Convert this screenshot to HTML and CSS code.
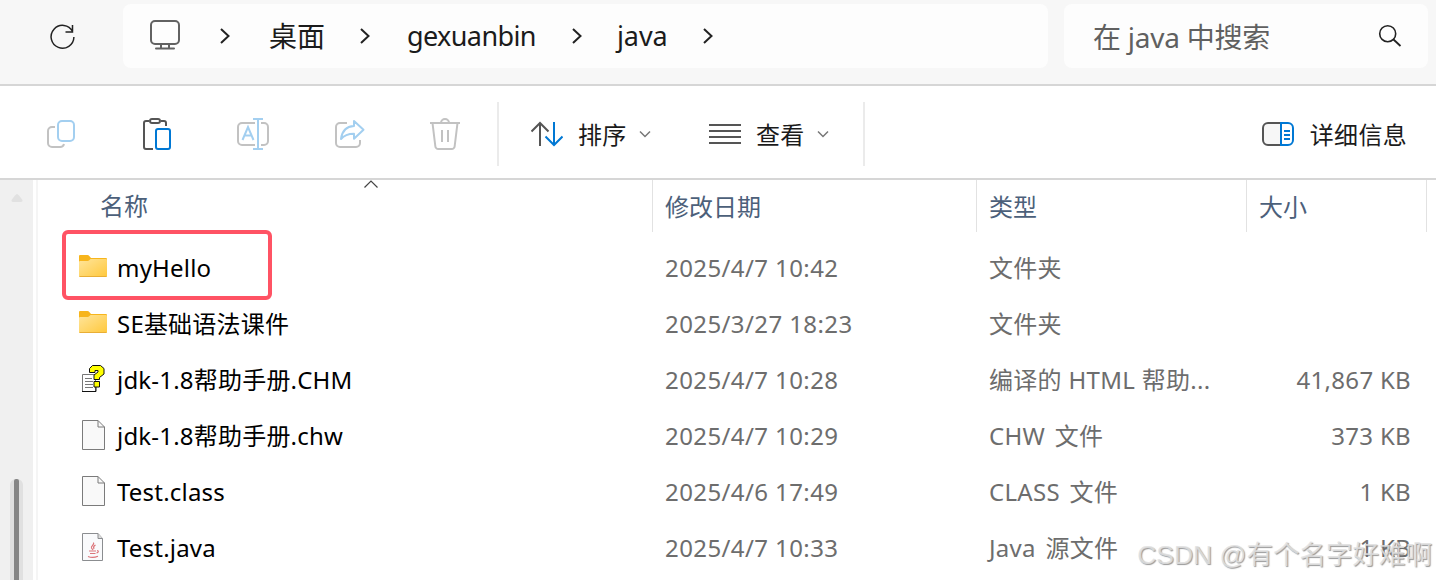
FILE: index.html
```
<!DOCTYPE html>
<html lang="zh-CN">
  <head>
    <meta charset="UTF-8" />
    <meta name="viewport" content="width=device-width, initial-scale=1.0" />
    <title>java</title>
    <link rel="stylesheet" href="styles.css">
  </head>
  <body>
    <div class="window">
      <div class="topbar">
        <div class="refresh">
          <svg width="28" height="28" viewBox="0 0 28 28"><path d="M23.6 8.500A11.400 11.400 0 1 0 24.900 14M23.500 2v7h-7" stroke="#222" stroke-width="1.5"/></svg>
        </div>
        <div class="address">
          <svg class="monitor" width="32" height="32" viewBox="0 0 32 32"><rect x="2" y="2" width="28" height="23" rx="4" stroke="#626262" stroke-width="2"/><path d="M12 25v4M20 25v4M7 29.5h18" stroke="#626262" stroke-width="2" stroke-linecap="round"/></svg>
          <svg class="arrow" width="10" height="18" viewBox="0 0 10 18"><path d="M1 2l7.5 7L1 16"/></svg>
          <span class="crumb desk">桌面</span>
          <svg class="arrow" width="10" height="18" viewBox="0 0 10 18"><path d="M1 2l7.5 7L1 16"/></svg>
          <span class="crumb user">gexuanbin</span>
          <svg class="arrow" width="10" height="18" viewBox="0 0 10 18"><path d="M1 2l7.5 7L1 16"/></svg>
          <span class="crumb folder">java</span>
          <svg class="arrow" width="10" height="18" viewBox="0 0 10 18"><path d="M1 2l7.5 7L1 16"/></svg>
        </div>
        <div class="search">
          <span>在 java 中搜索</span>
          <svg width="24" height="24" viewBox="0 0 24 24"><circle cx="9.7" cy="9.7" r="8" stroke="#222" stroke-width="1.6"/><path d="M15.5 15.5L22.5 22" stroke="#222" stroke-width="1.8"/></svg>
        </div>
      </div>

      <div class="toolbar">
        <div class="tools">
          <svg width="32" height="32" viewBox="0 0 32 32" class="off"><path class="gray" d="M10 9H7a4 4 0 0 0-4 4v12a4 4 0 0 0 4 4h8a4 4 0 0 0 4-3"/><rect class="blue" x="13" y="3" width="16" height="20" rx="4"/></svg>
          <svg width="32" height="32" viewBox="0 0 32 32"><path class="gray" d="M8 3H5a2 2 0 0 0-2 2v24a2 2 0 0 0 2 2h7M20 3h3a2 2 0 0 1 2 2v3"/><rect class="gray" x="9" y="1" width="10" height="4" rx="2"/><rect class="blue" x="15" y="11" width="14" height="20" rx="2"/></svg>
          <svg width="32" height="32" viewBox="0 0 32 32" class="off"><path class="gray" d="M18 5H5a4 4 0 0 0-4 4v14a4 4 0 0 0 4 4h13M24 5h3a4 4 0 0 1 4 4v14a4 4 0 0 1-4 4h-3"/><path class="blue" d="M21 1v30M16 1h10M16 31h10M5.500 22L11 9l5.500 13M7.500 17.500h7"/></svg>
          <svg width="32" height="32" viewBox="0 0 32 32" class="off"><path class="gray" d="M14 5H7a4 4 0 0 0-4 4v16a4 4 0 0 0 4 4h16a4 4 0 0 0 4-4v-3"/><path class="blue" d="M21 3l9.500 8.800-9.500 9v-5c-6 0-9.500 1-13 5.200 1-8 5-12.600 13-13z" stroke-linejoin="round"/></svg>
          <svg width="32" height="32" viewBox="0 0 32 32" class="off"><path class="gray" d="M1 5h30M12 5a4 4 0 0 1 8 0M3.500 5l2.800 23a3 3 0 0 0 3 3h13.400a3 3 0 0 0 3-3L28.500 5M13 12v12M19 12v12"/></svg>
        </div>
        <div class="sort">
          <svg width="32" height="32" viewBox="0 0 32 32"><path class="gray" d="M9 28V5M.5 13.500L9 5l8.500 8.500"/><path class="blue" d="M23 4v23M14.500 18.500L23 27l8.500-8.500"/></svg>
          <span>排序</span>
          <svg class="down" width="12" height="8" viewBox="0 0 12 8"><path d="M1 1.500l5 5 5-5"/></svg>
        </div>
        <div class="view">
          <svg width="32" height="32" viewBox="0 0 32 32"><path class="gray" d="M0 7h32M0 13h32M0 19h32M0 25h32"/></svg>
          <span>查看</span>
          <svg class="down" width="12" height="8" viewBox="0 0 12 8"><path d="M1 1.500l5 5 5-5"/></svg>
        </div>
        <div class="more">
          <svg width="32" height="6" viewBox="0 0 32 6" fill="#1b1b1b"><circle cx="3" cy="3" r="2.700"/><circle cx="16" cy="3" r="2.700"/><circle cx="29" cy="3" r="2.700"/></svg>
        </div>
        <div class="details">
          <svg width="32" height="32" viewBox="0 0 32 32"><path class="gray" d="M18 5H6a5 5 0 0 0-5 5v12a5 5 0 0 0 5 5h12" fill="#f7f7f7"/><path class="blue" d="M19 5h7a5 5 0 0 1 5 5v12a5 5 0 0 1-5 5h-7zM22 13h6M22 17h6M22 21h6"/></svg>
          <span>详细信息</span>
        </div>
      </div>

      <div class="content">
        <div class="side">
          <svg width="12" height="8" viewBox="0 0 12 8"><path d="M6 0Q7 0 8 1.500L11.500 6Q12 8 10 8H2Q0 8 .5 6L4 1.500Q5 0 6 0z" fill="#e1e1e1"/></svg>
          <div class="scroll"><div class="thumb"></div></div>
        </div>
        <div class="list">
          <div class="row head">
            <div class="name">名称
              <svg class="up" width="14" height="8" viewBox="0 0 14 8"><path d="M.5 7.500L7 1l6.500 6.500" stroke="#444" stroke-width="1.200"/></svg>
            </div>
            <div>修改日期</div>
            <div>类型</div>
            <div>大小</div>
          </div>
          <div class="row">
            <div class="name">
              <svg width="28" height="24" viewBox="0 0 28 24"><use href="#dir"/></svg>
              <span>myHello</span>
              <div class="mark"></div>
            </div>
            <div class="date">2025/4/7 10:42</div>
            <div>文件夹</div>
            <div class="size"></div>
          </div>
          <div class="row">
            <div class="name">
              <svg width="28" height="24" viewBox="0 0 28 24">
                <defs>
                  <linearGradient id="gold" x1="0" y1="0" x2="1" y2="1"><stop offset="0" stop-color="#ffe59b"/><stop offset="1" stop-color="#ffc83c"/></linearGradient>
                  <g id="dir"><path d="M1 0h7.500q1 0 2 1.200L12 3h15q1 0 1 1v8H0V1q0-1 1-1z" fill="#f7b51c"/><path d="M0 7q0-1 1-1h7.500q1 0 2-1l1-1H27q1 0 1 1v16q0 1-1 1H1q-1 0-1-1z" fill="url(#gold)"/><path d="M.5 21.500h27" stroke="#e9ae35"/></g>
                </defs>
                <use href="#dir"/>
              </svg>
              <span>SE基础语法课件</span>
            </div>
            <div class="date">2025/3/27 18:23</div>
            <div>文件夹</div>
            <div class="size"></div>
          </div>
          <div class="row">
            <div class="name">
              <svg width="28" height="30" viewBox="0 0 28 30"><path d="M3.500 10.500h13v17h-13z" fill="#fff" stroke="#777"/><path d="M3 27.500h14V22" stroke="#111"/><path d="M6 14.500h7M6 17.500h8M6 20.500h8M6 23.500h8" stroke="#777"/><path d="M10.500 8.500V4.500l3-3h8l3.500 3v5.500l-4.500 3.500v2h-5.500V11l4-3V6.500h-3v2zM15 17.500h5.500V23H15z" fill="#ffff00" stroke="#111"/></svg>
              <span>jdk-1.8帮助手册.CHM</span>
            </div>
            <div class="date">2025/4/7 10:28</div>
            <div>编译的 HTML 帮助...</div>
            <div class="size">41,867 KB</div>
          </div>
          <div class="row">
            <div class="name">
              <svg width="28" height="32" viewBox="0 0 28 32"><path d="M3.500 1.500h15.500l6.500 6.500v22.500h-22z" fill="#f9f9f9" stroke="#7b7b7b"/><path d="M19 1.500V8h6.500" stroke="#7b7b7b"/></svg>
              <span>jdk-1.8帮助手册.chw</span>
            </div>
            <div class="date">2025/4/7 10:29</div>
            <div class="kind">CHW 文件</div>
            <div class="size">373 KB</div>
          </div>
          <div class="row">
            <div class="name">
              <svg width="28" height="32" viewBox="0 0 28 32"><path d="M3.500 1.500h15.500l6.500 6.500v22.500h-22z" fill="#f9f9f9" stroke="#7b7b7b"/><path d="M19 1.500V8h6.500" stroke="#7b7b7b"/></svg>
              <span>Test.class</span>
            </div>
            <div class="date">2025/4/6 17:49</div>
            <div class="kind">CLASS 文件</div>
            <div class="size">1 KB</div>
          </div>
          <div class="row">
            <div class="name">
              <svg width="28" height="32" viewBox="0 0 28 32"><path d="M3.500 2.500h15.500l4.500 5v22h-20z" fill="#f9fafc" stroke="#8b8d90"/><path d="M19 2.500V7.500h4.500" fill="#ddd" stroke="#8b8d90"/><path d="M14.500 11.500c1.500 2-3 3.500-2 5.500l1.500 2M16.500 14c-3 1.500-2 2.500-1.500 4M10 20h7M11 22.500h5.500M18 19.500c2 0 1.500 2-.5 2.500M9 25.500c3 1.200 7 1 10-.3" stroke="#dc757b" stroke-width="1.200"/></svg>
              <span>Test.java</span>
            </div>
            <div class="date">2025/4/7 10:33</div>
            <div class="kind">Java 源文件</div>
            <div class="size">1 KB</div>
          </div>
        </div>
      </div>
      <div class="watermark">CSDN @有个名字好难啊</div>
    </div>
  </body>
</html>
```
FILE: styles.css
```
* {
  box-sizing: border-box;
}
body {
  margin: 0;
  font-family: "Noto Sans", "Noto Sans CJK SC", sans-serif;
  font-size: 24px;
  color: #1b1b1b;
}
svg {
  fill: none;
  flex-shrink: 0;
}
.window {
  width: 1436px;
  height: 580px;
  position: relative;
  overflow: hidden;
  background: #fff;
  white-space: nowrap;
}
.topbar {
  height: 86px;
  display: flex;
  padding: 4px 8px 16px 0;
  background: #f7f7f7;
  border-bottom: 2px solid #d6d6d6;
  font-size: 28px;
}
.refresh {
  width: 123px;
  padding: 17px 0 0 49px;
}
.address {
  width: 925px;
  height: 64px;
  display: flex;
  align-items: center;
  padding-left: 26px;
  background: #fdfdfd;
  border-radius: 8px;
}
.monitor {
  margin: -2px 39px 0 0;
}
.arrow path {
  stroke: #222;
  stroke-width: 2;
}
.crumb {
  line-height: 40px;
}
.desk {
  width: 91px;
  margin-left: 39px;
}
.user {
  width: 165px;
  margin-left: 37px;
  font-size: 27px;
  letter-spacing: -0.6px;
}
.folder {
  width: 86px;
  margin-left: 35px;
  font-size: 27px;
  letter-spacing: -0.1px;
}
.search {
  width: 364px;
  height: 64px;
  margin-left: 16px;
  padding: 0 26px 0 29px;
  display: flex;
  align-items: center;
  justify-content: space-between;
  background: #fdfdfd;
  border-radius: 8px;
  color: #606060;
  letter-spacing: -0.25px;
}
.toolbar {
  height: 94px;
  display: flex;
  align-items: center;
  padding-top: 4px;
  border-bottom: 2px solid #d6d6d6;
}
.toolbar svg {
  stroke-width: 2;
}
.toolbar span {
  padding-bottom: 1px;
  letter-spacing: 0.3px;
}
.gray {
  stroke: #555;
}
.blue {
  stroke: #0078d4;
}
.off .gray {
  stroke: #c2c2c2;
}
.off .blue {
  stroke: #a3cff0;
}
.toolbar .down {
  stroke: #777;
  stroke-width: 1.5;
}
.tools {
  width: 499px;
  height: 64px;
  display: flex;
  align-items: center;
  gap: 64px;
  padding-left: 45px;
  border-right: 2px solid #ebebeb;
}
.sort,
.view {
  display: flex;
  align-items: center;
  gap: 12px;
}
.sort {
  width: 178px;
  padding-left: 32px;
}
.sort span,
.view span {
  width: 49px;
  margin-left: 3px;
}
.view {
  width: 188px;
  height: 64px;
  padding-left: 32px;
  border-right: 2px solid #ebebeb;
}
.more {
  display: flex;
  padding-left: 32px;
}
.details {
  display: flex;
  align-items: center;
  gap: 16px;
  margin-left: auto;
  padding-right: 29px;
}
.content {
  height: 400px;
  display: flex;
}
.side {
  width: 33px;
  display: flex;
  flex-direction: column;
  align-items: center;
  padding-top: 14px;
  background: #f0f0f0;
}
.scroll {
  width: 13px;
  height: 110px;
  margin-top: 277px;
  padding: 0 4px;
  background: #e0e0e0;
  border-radius: 6px 6px 0 0;
}
.thumb {
  height: 110px;
  background: #868686;
  border-radius: 2px 2px 0 0;
}
.list {
  margin-left: 3px;
  border-left: 2px solid #f5f5f5;
}
.row {
  height: 56px;
  display: grid;
  grid-template-columns: 615px 324px 270px 180px;
  align-items: center;
  color: #6d6d6d;
  line-height: 34px;
}
.row > div {
  padding: 1px 0 0 12px;
  letter-spacing: 0.3px;
}
.row .name {
  position: relative;
  display: flex;
  align-items: center;
  gap: 10px;
  padding: 0 0 0 41px;
  letter-spacing: 0.2px;
  color: #000;
}
.name span {
  padding-top: 1px;
}
.row .date {
  letter-spacing: 0.4px;
}
.row .kind {
  word-spacing: 3px;
}
.row .size {
  padding-right: 16px;
  text-align: right;
}
.row.head {
  height: 52px;
  margin-bottom: 7px;
}
.head > div,
.head .name {
  height: 52px;
  line-height: 52px;
  letter-spacing: 0;
  border-right: 1px solid #e2e2e2;
  color: #4c607a;
}
.head .name {
  padding-left: 62px;
}
.up {
  position: absolute;
  left: 326px;
  top: 0;
}
.mark {
  position: absolute;
  left: 24px;
  top: -20px;
  width: 210px;
  height: 70px;
  border: 4px solid #ff5364;
  border-radius: 6px;
}
.watermark {
  position: absolute;
  right: 4px;
  bottom: 8px;
  font-family: "Liberation Sans", "Noto Sans CJK SC", sans-serif;
  font-size: 26.5px;
  color: rgba(225, 225, 225, 0.85);
  text-shadow: 1px 1px 1px rgba(110, 110, 110, 0.7);
}
```
